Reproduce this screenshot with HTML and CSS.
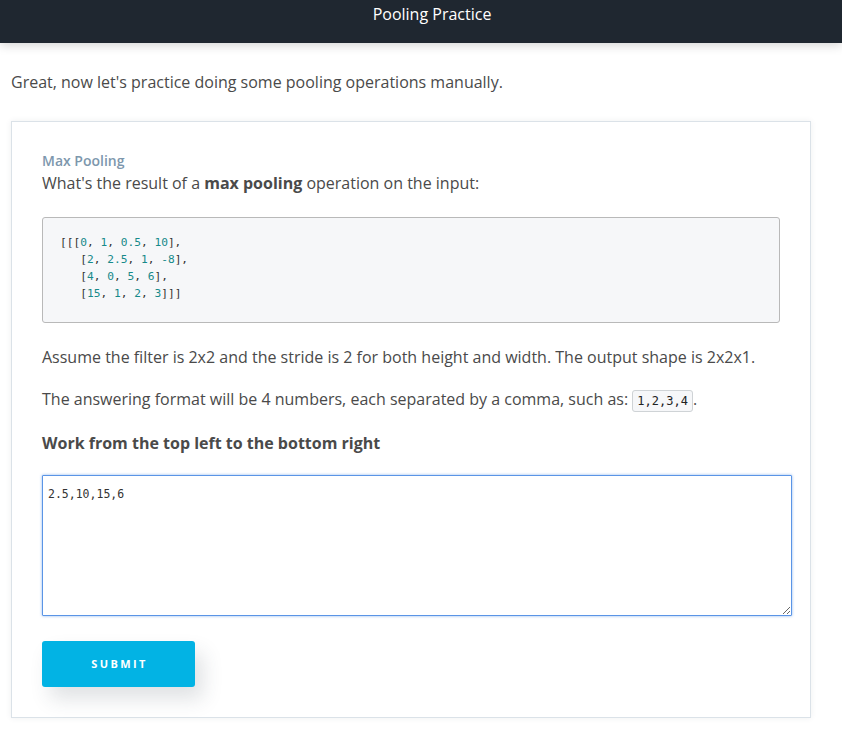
FILE: index.html
```html
<!DOCTYPE html>
<html lang="en">
<head>
<meta charset="utf-8">
<title>Pooling Practice</title>
<link rel="stylesheet" href="styles.css">
</head>
<body>
<header class="topbar"><h1 class="topbar-title">Pooling Practice</h1></header>
<main class="page">
  <p class="intro">Great, now let's practice doing some pooling operations manually.</p>
  <section class="card">
    <div class="quiz-label">Max Pooling</div>
    <p class="question">What's the result of a <strong>max pooling</strong> operation on the input:</p>
    <pre class="code-block"><span class="p">[[[</span><span class="n">0</span><span class="p">, </span><span class="n">1</span><span class="p">, </span><span class="n">0.5</span><span class="p">, </span><span class="n">10</span><span class="p">],</span>
   <span class="p">[</span><span class="n">2</span><span class="p">, </span><span class="n">2.5</span><span class="p">, </span><span class="n">1</span><span class="p">, </span><span class="n">-8</span><span class="p">],</span>
   <span class="p">[</span><span class="n">4</span><span class="p">, </span><span class="n">0</span><span class="p">, </span><span class="n">5</span><span class="p">, </span><span class="n">6</span><span class="p">],</span>
   <span class="p">[</span><span class="n">15</span><span class="p">, </span><span class="n">1</span><span class="p">, </span><span class="n">2</span><span class="p">, </span><span class="n">3</span><span class="p">]]]</span></pre>
    <p class="text">Assume the filter is 2x2 and the stride is 2 for both height and width. The output shape is 2x2x1.</p>
    <p class="text">The answering format will be 4 numbers, each separated by a comma, such as: <code class="inline-code">1,2,3,4</code>.</p>
    <p class="text strong-line"><strong>Work from the top left to the bottom right</strong></p>
    <textarea class="answer">2.5,10,15,6</textarea>
    <button class="submit" type="button">Submit</button>
  </section>
</main>
</body>
</html>
```
FILE: styles.css
```css
html, body {
  margin: 0;
  padding: 0;
  background: #fff;
}
body {
  font-family: "Open Sans", "Noto Sans", sans-serif;
  color: #4a4a4a;
}
.topbar {
  height: 43px;
  background: #1f2730;
  display: flex;
  justify-content: center;
  align-items: flex-start;
  padding-left: 22px;
  box-shadow: 0 2px 10px rgba(0,0,0,0.18);
  position: relative;
  z-index: 1;
}
.topbar-title {
  margin: 0;
  padding-top: 2px;
  font-size: 16px;
  font-weight: 400;
  line-height: 24px;
  color: #fff;
}
.page {
  padding: 27px 11px 40px;
}
.intro {
  margin: 0 0 27px;
  font-size: 16px;
  line-height: 24px;
  color: #4a4a4a;
}
.card {
  width: 800px;
  box-sizing: border-box;
  border: 1px solid #dbe2e8;
  box-shadow: 0 0 6px rgba(46, 61, 73, 0.08);
  padding: 29px 17px 30px 30px;
  background: #fff;
}
.quiz-label {
  font-size: 14px;
  line-height: 20px;
  color: #7d97ad;
  font-weight: 600;
}
.question {
  margin: 0 0 22px;
  font-size: 16px;
  line-height: 24px;
}
.question strong { font-weight: 700; color: #4a4a4a; }
.code-block {
  margin: 0 13px 22px 0;
  padding: 16px 17px 20px;
  background: #f6f7f9;
  border: 1px solid #b9b9b9;
  border-radius: 3px;
  font-family: "DejaVu Sans Mono", "Liberation Mono", monospace;
  font-size: 11.2px;
  line-height: 17px;
  color: #333;
}
.code-block .n { color: #168a8a; }
.code-block .p { color: #333; }
.text {
  margin: 0 0 18px;
  font-size: 16px;
  line-height: 24px;
}
.strong-line { margin-bottom: 20px; }
.strong-line strong { font-weight: 700; color: #4a4a4a; }
.inline-code {
  font-family: "DejaVu Sans Mono", "Liberation Mono", monospace;
  font-size: 12px;
  background: #f6f7f9;
  border: 1px solid #cfd3d6;
  border-radius: 3px;
  padding: 3px 4px;
  color: #222;
}
.answer {
  display: block;
  width: 750px;
  height: 141px;
  box-sizing: border-box;
  margin: 0 0 25px;
  padding: 10px 5px 9px;
  border: 1px solid #5b95e6;
  box-shadow: 0 0 3px rgba(91, 149, 230, 0.7);
  border-radius: 1px;
  font-family: "DejaVu Sans Mono", "Liberation Mono", monospace;
  font-size: 11.5px;
  line-height: 16px;
  color: #333;
  outline: none;
  resize: both;
}
.submit {
  display: block;
  width: 153px;
  height: 46px;
  border: none;
  border-radius: 3px;
  background: #02b3e4;
  color: #fff;
  font-family: "Open Sans", sans-serif;
  font-weight: 700;
  font-size: 11px;
  letter-spacing: 2.4px;
  text-transform: uppercase;
  box-shadow: 8px 12px 20px rgba(46, 61, 73, 0.15);
  padding: 0 0 2px 2px;
}
```
